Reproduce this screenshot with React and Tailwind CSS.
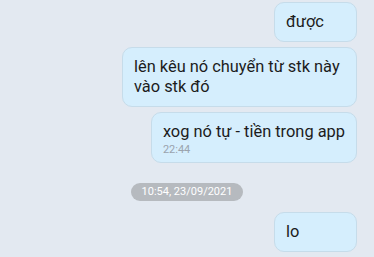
import React from 'react'

const Bubble = ({ children, time, className = '' }) => (
  <div className={`self-end min-w-[83px] max-w-[235px] bg-[#d5eefd] border border-[#c6dcea] rounded-[10px] px-[11px] py-[9px] ${className}`}>
    <p className="text-[16.4px] leading-[20px] text-[#1c1c1c]">{children}</p>
    {time && <p className="text-[11px] leading-[13px] text-[#9aa3ad] mt-[1px] -mb-[3px]">{time}</p>}
  </div>
)

export default function App() {
  return (
    <div className="w-[374px] h-[257px] overflow-hidden bg-[#e3e9f1] font-['Roboto',sans-serif]">
      <div className="flex flex-col pt-[2px] pr-[17px] gap-[5px]">
        <Bubble>được</Bubble>
        <Bubble>lên kêu nó chuyển từ stk này vào stk đó</Bubble>
        <Bubble time="22:44">xog nó tự - tiền trong app</Bubble>

        <div className="flex justify-center pl-[17px] mt-[15px] mb-[6px]">
          <span className="bg-[#b6babf] text-white text-[11px] leading-[18px] px-[11px] rounded-full">
            10:54, 23/09/2021
          </span>
        </div>

        <Bubble>lo</Bubble>
        <div className="self-end w-[75px] h-[20px] bg-[#d5eefd] border border-[#c6dcea] rounded-[10px]" />
      </div>
    </div>
  )
}
